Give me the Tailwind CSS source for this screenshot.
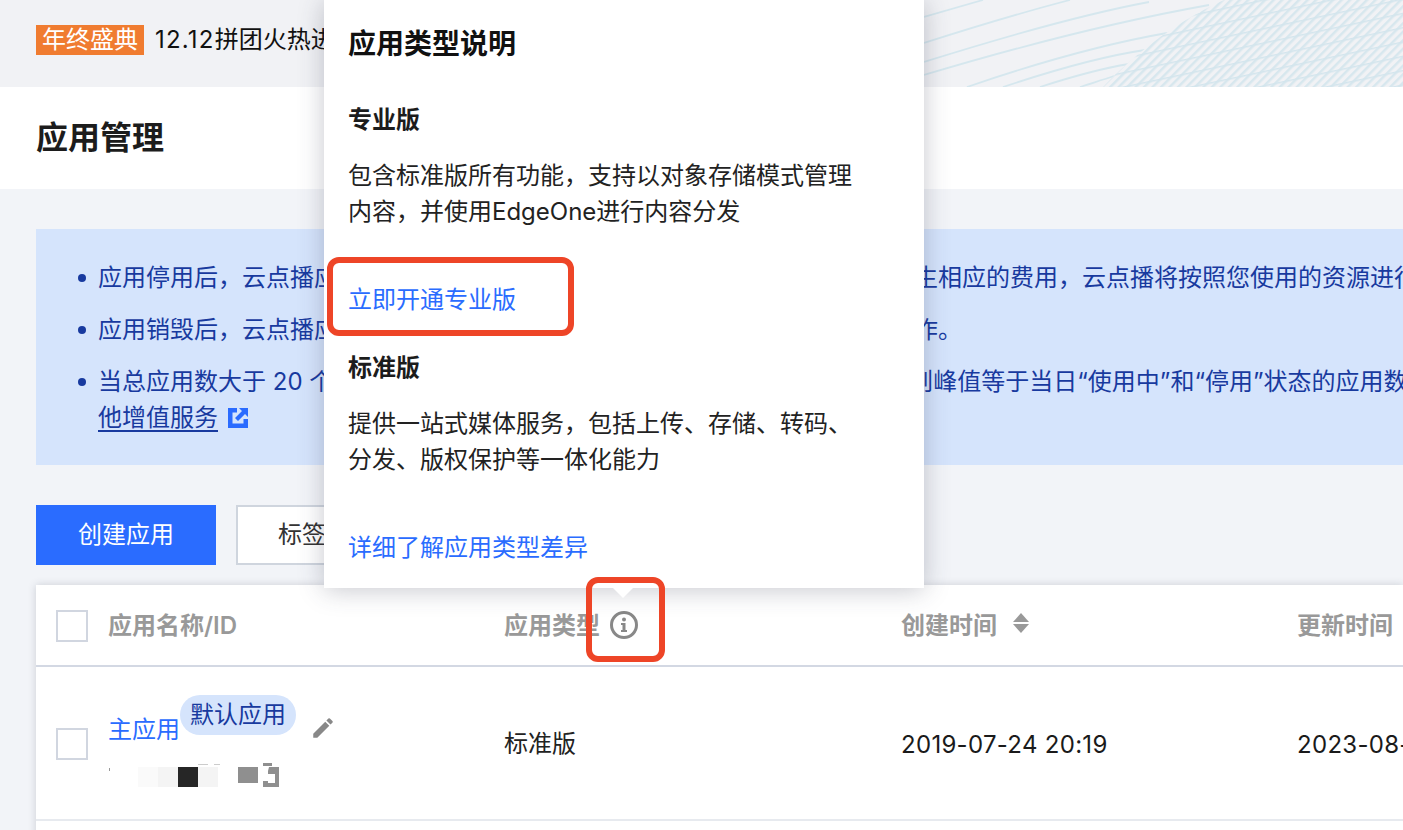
<!DOCTYPE html>
<html lang="zh-CN">
  <head>
    <meta charset="utf-8" />
    <title>应用管理</title>
    <script src="https://cdn.jsdelivr.net/npm/@tailwindcss/browser@4"></script>
  </head>
  <body class="bg-[#f2f4f8]">
    <div
      class="relative w-[1403px] h-[830px] overflow-hidden bg-[#f2f4f8] text-[24px] leading-[36px] text-[#111] font-['Inter','Noto_Sans_CJK_SC',sans-serif]"
    >
      <!-- promo bar -->
      <div class="relative flex items-center h-[87px] pb-[7px] pl-[36px] bg-[#f1f2f5] overflow-hidden">
        <svg class="absolute top-0 right-0" width="479" height="87" viewBox="0 0 479 87" fill="none">
          <defs>
            <pattern id="hatch" width="6" height="6" patternUnits="userSpaceOnUse" patternTransform="rotate(-45)">
              <rect width="6" height="2.500" fill="#d7e7ee" />
            </pattern>
            <pattern id="weave" width="44" height="14" patternUnits="userSpaceOnUse" patternTransform="rotate(-12)">
              <rect width="44" height="1.500" fill="#d3e5ed" />
            </pattern>
          </defs>
          <g stroke="#d5e7ee" stroke-width="1.800">
            <path d="M0 17L59 0" />
            <path d="M0 43C50 27 100 12 146 0" />
            <path d="M0 62C70 40 150 16 225 2" />
            <path d="M0 75C90 48 190 22 285 5" />
            <path d="M43 87C110 64 180 44 243 33" />
            <path d="M79 87C130 70 180 56 221 50" />
            <path d="M116 87C150 76 180 68 205 64" />
            <path d="M156 87C165 84 178 80 190 76" />
          </g>
          <path d="M179 87C205 60 245 25 300 0H479V87Z" fill="#f1f2f5" />
          <path d="M179 87C205 60 245 25 300 0H479V87Z" fill="url(#hatch)" />
          <path d="M179 87C205 60 245 25 300 0H479V87Z" fill="url(#weave)" />
        </svg>
        <span class="relative h-[30px] px-[6px] bg-[#f07c30] text-white leading-[30px]">年终盛典</span>
        <span class="relative ml-[11px] whitespace-nowrap"><span class="tracking-[1.2px]">12.12</span>拼团火热进行中</span>
      </div>

      <!-- page title -->
      <div class="flex items-center h-[102px] pl-[36px] bg-white">
        <h1 class="text-[32px] font-bold leading-[44px] text-[#1c1c1c]">应用管理</h1>
      </div>

      <div class="pt-[40px] pl-[36px]">
        <!-- notice -->
        <ul class="flex flex-col gap-[16px] h-[236px] pt-[31px] pl-[62px] bg-[#d5e4fc] text-[#183a9f]">
          <li class="relative whitespace-nowrap">
            <i class="absolute left-[-20px] top-[14px] size-[8px] rounded-full bg-[#183a9f]"></i>
            应用停用后，云点播应用内的所有资源将无法被访问，但存储资源依旧还会产生相应的费用，云点播将按照您使用的资源进行计费
          </li>
          <li class="relative whitespace-nowrap">
            <i class="absolute left-[-20px] top-[14px] size-[8px] rounded-full bg-[#183a9f]"></i>
            应用销毁后，云点播应用内的所有资源将被彻底删除且无法恢复，请您谨慎操作。
          </li>
          <li class="relative">
            <i class="absolute left-[-20px] top-[14px] size-[8px] rounded-full bg-[#183a9f]"></i>
            <div class="whitespace-nowrap">当总应用数大于 20 个时，将按超出的应用数量收取费用，每日应用的计费规则峰值等于当日“使用中”和“停用”状态的应用数</div>
            <div class="flex items-center">
              <a class="underline underline-offset-[4px]">他增值服务</a>
              <svg class="ml-[10px]" width="20" height="20" viewBox="0 0 20 20">
                <path d="M0 0H9V4.500H4.500V15.500H15.500V11H20V20H0Z" fill="#2a6bff" />
                <path d="M11 0H20V9L17 6L10 13L7 10L14 3Z" fill="#2a6bff" />
              </svg>
            </div>
          </li>
        </ul>

        <!-- actions -->
        <div class="flex gap-[20px] mt-[40px]">
          <button class="w-[180px] h-[60px] bg-[#2a6cff] text-white">创建应用</button>
          <button class="w-[180px] h-[60px] bg-white border-2 border-[#cfd5de] text-[#333]">标签管理</button>
        </div>

        <!-- table -->
        <div class="mt-[20px] bg-white shadow-[0_0_8px_rgba(54,58,80,0.2)]">
          <div class="grid grid-cols-[448px_397px_396px_360px] h-[82px] pt-[2px] items-center border-b-2 border-[#d3d8e3] text-[#999] font-semibold">
            <div class="flex items-center gap-[20px] pl-[20px]">
              <span class="size-[32px] border-2 border-[#d1d6e0] bg-white"></span>
              <span>应用名称/ID</span>
            </div>
            <div class="flex items-center pl-[20px]">
              <span>应用类型</span>
              <svg class="ml-[9px] mb-[2px]" width="30" height="30" viewBox="0 0 30 30" fill="none">
                <circle cx="15" cy="15" r="12.500" stroke="#888" stroke-width="3" />
                <circle cx="15" cy="9.500" r="2" fill="#888" />
                <path d="M12 13H16.500V20H18V22H12V20H13.500V15H12Z" fill="#888" />
              </svg>
            </div>
            <div class="flex items-center pl-[20px]">
              <span>创建时间</span>
              <svg class="ml-[16px] mb-[6px]" width="16" height="20" viewBox="0 0 16 20" fill="#999">
                <path d="M8 0L16 9H0Z" />
                <path d="M8 20L0 11H16Z" />
              </svg>
            </div>
            <div class="pl-[20px]">更新时间</div>
          </div>
          <div class="grid grid-cols-[448px_397px_396px_360px] h-[154px] pt-[2px] items-center border-b-2 border-[#e7eaef]">
            <div class="flex items-center gap-[20px] h-full pl-[20px]">
              <span class="size-[32px] border-2 border-[#d1d6e0] bg-white"></span>
              <div class="w-[300px] h-full">
                <div class="flex items-start pt-[26px]">
                  <a class="mt-[17px] text-[#2a6cff]">主应用</a>
                  <span class="h-[40px] px-[10px] rounded-full bg-[#d5e4fc] text-[#183a9f] leading-[40px]">默认应用</span>
                  <svg class="ml-[14px] mt-[20px]" width="26" height="26" viewBox="0 0 24 24" fill="#888">
                    <path d="M3 17.250V21h3.750L17.810 9.940l-3.750-3.750L3 17.250zM20.710 7.040a1 1 0 000-1.410l-2.340-2.340a1 1 0 00-1.410 0l-1.830 1.830 3.750 3.750 1.830-1.830z" />
                  </svg>
                </div>
                <!-- id is blurred out in the source -->
                <div class="relative flex items-start mt-[19px] h-[20px]">
                  <i class="ml-[1px] mt-[1px] w-[1px] h-[3px] bg-[#999]"></i>
                  <i class="ml-[28px] w-[20px] h-[20px] bg-[#fafafa]"></i>
                  <i class="w-[20px] h-[20px] bg-[#f4f4f4]"></i>
                  <i class="w-[20px] h-[20px] bg-[#262626]"></i>
                  <i class="w-[20px] h-[20px] bg-[#f4f4f4]"></i>
                  <i class="ml-[20px] w-[20px] h-[16px] bg-[#8f8f8f]"></i>
                  <svg class="ml-[5px] mt-[-4px]" width="16" height="24" viewBox="0 0 16 24" fill="#8f8f8f">
                    <path d="M0 0H9V3H0Z" />
                    <path d="M6 4H16V24H0V18H5V20H12V11H5V8Z" />
                  </svg>
                  <i class="absolute left-[90px] top-[-3px] w-[10px] h-[1px] bg-[#ccc]"></i>
                  <i class="absolute left-[106px] top-[-3px] w-[6px] h-[1px] bg-[#ccc]"></i>
                </div>
              </div>
            </div>
            <div class="pl-[20px] text-[#222]">标准版</div>
            <div class="pl-[20px] mt-[1px] whitespace-nowrap tracking-[0.3px] text-[#1a1a1a]">2019-07-24 20:19</div>
            <div class="pl-[20px] mt-[1px] whitespace-nowrap tracking-[0.3px] text-[#1a1a1a]">2023-08-16 10:32</div>
          </div>
          <div class="h-[154px]"></div>
        </div>
      </div>

      <!-- tooltip over the table -->
      <div class="absolute left-[324px] top-0 w-[600px] h-[588px] px-[24px] pt-[24px] bg-white shadow-[0_2px_24px_rgba(54,58,80,0.28)]">
        <h2 class="text-[28px] font-bold leading-[40px] text-[#111]">应用类型说明</h2>
        <h3 class="mt-[38px] font-bold text-[#1c1c1c]">专业版</h3>
        <p class="mt-[20px] w-[510px] text-[#222]">包含标准版所有功能，支持以对象存储模式管理内容，并使用EdgeOne进行内容分发</p>
        <a class="block mt-[52px] text-[#2a6cff]">立即开通专业版</a>
        <h3 class="mt-[32px] font-bold text-[#1c1c1c]">标准版</h3>
        <p class="mt-[20px] w-[510px] text-[#222]">提供一站式媒体服务，包括上传、存储、转码、分发、版权保护等一体化能力</p>
        <a class="block mt-[52px] text-[#2a6cff]">详细了解应用类型差异</a>
        <i class="absolute left-[289px] top-full border-x-[10px] border-t-[10px] border-x-transparent border-t-white"></i>
      </div>

      <!-- red annotation boxes -->
      <div class="absolute left-[327px] top-[257px] w-[247px] h-[79px] border-[6px] border-[#ee4527] rounded-[12px]"></div>
      <div class="absolute left-[586px] top-[577px] w-[79px] h-[85px] border-[6px] border-[#ee4527] rounded-[12px]"></div>
    </div>
  </body>
</html>
